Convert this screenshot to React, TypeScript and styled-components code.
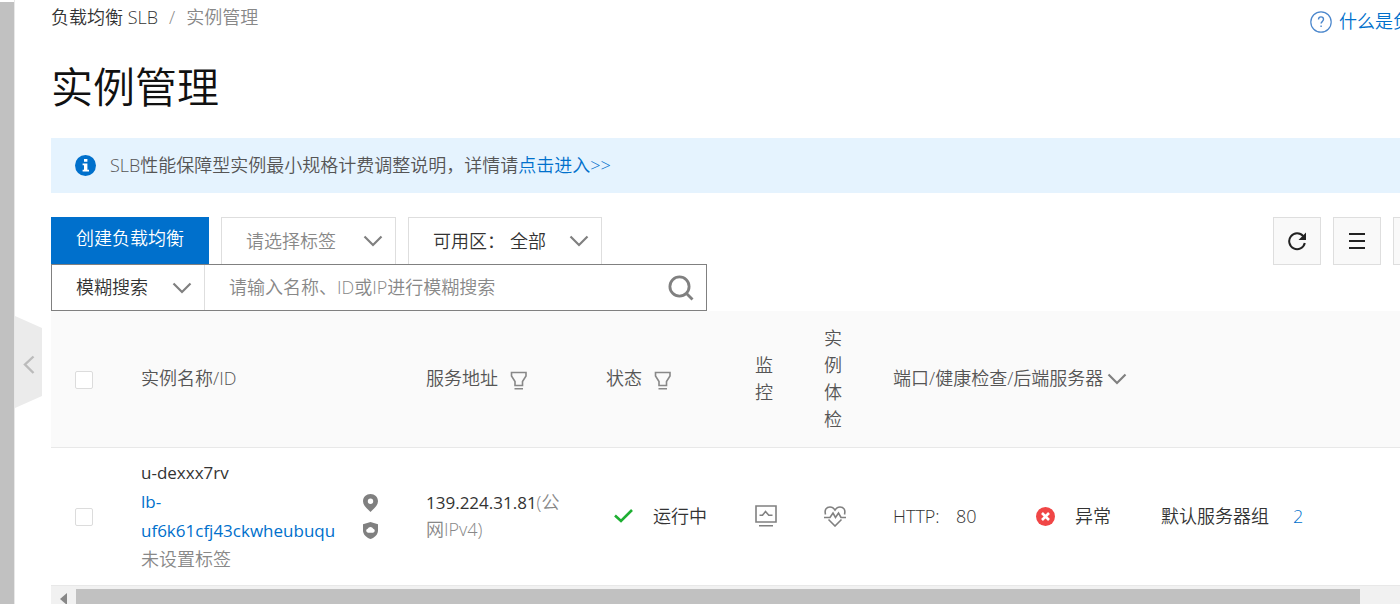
import React from 'react';
import styled, { createGlobalStyle } from 'styled-components';

const GlobalStyle = createGlobalStyle`
  *, *::before, *::after { box-sizing: border-box; }
  html, body { margin: 0; background: #fff; }
  body, button, input, select {
    font-family: "Open Sans", "Noto Sans CJK SC", sans-serif;
    font-size: 18px;
    font-weight: 350;
    line-height: 27px;
    color: #333;
  }
  a { color: #0070cc; text-decoration: none; }
  svg { display: block; flex: none; }
`;

const Page = styled.div`
  position: relative;
  display: flex;
  min-height: 100vh;
  overflow: hidden;
`;

const SideScroll = styled.div`
  flex: 0 0 15px;
  padding-top: 2px;
  background: #c1c1c1 content-box;
  border-right: 1px solid #e8e8e8;
`;

const Handle = styled.button`
  position: absolute;
  left: 15px;
  top: 316px;
  width: 27px;
  height: 92px;
  padding: 0;
  border: 0;
  background: none;
`;

const Main = styled.main`
  flex: 1;
  min-width: 0;
  padding-left: 36px;
`;

const Top = styled.header`
  display: flex;
  justify-content: space-between;
`;

const Crumbs = styled.nav`
  display: flex;
  gap: 11px;
  padding-top: 4px;
  color: #888;
  white-space: nowrap;
  a { color: #333; }
`;

const Help = styled.a`
  display: flex;
  flex: 0 0 90px;
  min-width: 0;
  align-items: center;
  gap: 7px;
  padding-top: 8px;
  white-space: nowrap;
`;

const Title = styled.h1`
  margin: 20px 0;
  font-size: 42px;
  font-weight: 350;
  line-height: 63px;
  color: #111;
`;

const Notice = styled.div`
  display: flex;
  align-items: center;
  gap: 14px;
  height: 55px;
  padding-left: 24px;
  background: #e5f3fe;
  color: #555;
`;

const Toolbar = styled.div`
  display: flex;
  gap: 12px;
  height: 48px;
  margin: 24px -41px 0 0;
`;

const Primary = styled.button`
  width: 158px;
  padding: 0 0 5px;
  border: 0;
  background: #0070cc;
  color: #fff;
`;

const SelectBox = styled.label<{ $width: number; $muted?: boolean; $plain?: boolean }>`
  display: grid;
  grid-template-columns: auto 1fr;
  align-items: center;
  width: ${p => p.$width}px;
  padding: 0 12px 0 24px;
  border: solid #dedede;
  border-width: ${p => (p.$plain ? '0 1px 0 0' : '1px')};
  background: #fff;
  select {
    grid-column: 2;
    grid-row: 1;
    width: 100%;
    padding: 0;
    border: 0;
    appearance: none;
    background: none;
    color: ${p => (p.$muted ? '#888' : '#333')};
  }
  svg { grid-column: 2; grid-row: 1; justify-self: end; pointer-events: none; }
  span { padding-right: 5px; }
`;

const Tools = styled.div`
  display: flex;
  gap: 12px;
  margin-left: auto;
`;

const ToolButton = styled.button`
  display: grid;
  place-items: center;
  width: 48px;
  padding: 0;
  border: 1px solid #dedede;
  background: #f9f9f9;
`;

const Search = styled.form`
  display: flex;
  width: 656px;
  max-width: 100%;
  height: 47px;
  margin-top: -1px;
  position: relative;
  border: 1px solid #808080;
  background: #fff;
  input {
    flex: 1;
    min-width: 0;
    padding: 0 24px;
    border: 0;
    outline: 0;
    background: none;
  }
  input::placeholder { color: #888; opacity: 1; }
`;

const SearchButton = styled.button`
  display: grid;
  place-items: center;
  width: 50px;
  padding: 0;
  border: 0;
  background: none;
`;

const TableArea = styled.div`
  overflow: hidden;
`;

const Table = styled.table`
  width: 100%;
  min-width: 1340px;
  table-layout: fixed;
  border-collapse: collapse;
  th, td {
    padding: 0 24px;
    text-align: left;
    font-weight: 350;
    border-bottom: 1px solid #e8e8e8;
  }
  th { height: 136px; background: #fafafa; color: #555; }
  td { height: 138px; }
`;

const Check = styled.input.attrs({ type: 'checkbox' })`
  display: block;
  appearance: none;
  width: 18px;
  height: 18px;
  margin: 2px 0 0;
  border: 1px solid #dcdcdc;
  border-radius: 2px;
  background: #fff;
`;

const Inline = styled.div<{ $gap: number }>`
  display: flex;
  align-items: center;
  gap: ${p => p.$gap}px;
  white-space: nowrap;
`;

const Narrow = styled.div`
  width: 18px;
`;

const Instance = styled.div`
  display: flex;
  align-items: center;
  justify-content: space-between;
  line-height: 29px;
`;

const Lines = styled.div`
  display: flex;
  flex-direction: column;
  width: 196px;
`;

const Code = styled.span`
  font-size: 17px;
  font-weight: 400;
`;

const Badges = styled.div`
  display: grid;
  gap: 10px;
`;

const Muted = styled.span`
  color: #888;
`;

const Listener = styled.div`
  display: grid;
  grid-template-columns: 63px 80px 39px 86px 132px auto;
  align-items: center;
  white-space: nowrap;
`;

const ScrollTrack = styled.div`
  display: flex;
  height: 19px;
  padding-top: 3px;
  background: #f1f1f1;
`;

const ScrollArrow = styled.button`
  display: grid;
  place-items: center;
  width: 25px;
  padding: 4px 0 0;
  border: 0;
  background: none;
`;

const ScrollThumb = styled.div`
  flex: 1;
  margin-right: 40px;
  background: #c1c1c1;
`;

const Chevron = () => (
  <svg width="20" height="12" viewBox="0 0 20 12" fill="none" stroke="#808080" strokeWidth="2.2">
    <path d="M1.5 1.5 10 10l8.5-8.5" />
  </svg>
);

const Filter = () => (
  <svg width="18" height="24" viewBox="0 0 18 24" fill="none" stroke="#888" strokeWidth="1.6">
    <path d="M1.500 5.500h14.500v3.500l-3.500 5.500v4H5v-4L1.500 9ZM4.500 21.800h8.500" />
  </svg>
);

export default function App() {
  return (
    <>
      <GlobalStyle />
      <Page>
        <SideScroll />
        <Handle aria-label="收起菜单">
          <svg width="27" height="92" viewBox="0 0 27 92" fill="none">
            <path d="M0 0 27 12V80L0 92Z" fill="#ebebeb" />
            <path d="M18.5 40.5 10 48.5l8.5 8.5" stroke="#bbb" strokeWidth="2.4" />
          </svg>
        </Handle>
        <Main>
          <Top>
            <Crumbs>
              <a href="#slb">负载均衡 SLB</a>
              <span>/</span>
              <span>实例管理</span>
            </Crumbs>
            <Help href="#help">
              <svg width="22" height="22" viewBox="0 0 22 22" fill="none" stroke="#4a86cc">
                <circle cx="11" cy="11" r="10.2" strokeWidth="1.2" />
                <path d="M8.500 8.600c0-1.700 1-2.700 2.500-2.700s2.500 1 2.500 2.400c0 2-2.400 2.200-2.400 4.300M11.100 14.400v1.700" strokeWidth="1.4" />
              </svg>
              什么是负载均衡
            </Help>
          </Top>
          <Title>实例管理</Title>
          <Notice>
            <svg width="21" height="21" viewBox="0 0 21 21">
              <circle cx="10.5" cy="10.5" r="10.5" fill="#0070cc" />
              <path d="M9 4h3.400v2.800H9ZM7.600 8.400h4.800v6.400H14v1.800H7.600v-1.800H9v-4.600H7.600Z" fill="#fff" />
            </svg>
            <span>SLB性能保障型实例最小规格计费调整说明，详情请<a href="#notice">点击进入&gt;&gt;</a></span>
          </Notice>
          <Toolbar>
            <Primary>创建负载均衡</Primary>
            <SelectBox $width={175} $muted>
              <select aria-label="标签"><option>请选择标签</option></select>
              <Chevron />
            </SelectBox>
            <SelectBox $width={194}>
              <span>可用区：</span>
              <select><option>全部</option></select>
              <Chevron />
            </SelectBox>
            <Tools>
              <ToolButton aria-label="刷新">
                <svg width="20" height="20" viewBox="0 0 20 20" fill="none">
                  <path d="M16.2 5.2A7.900 7.900 0 1 0 17.800 12" stroke="#222" strokeWidth="2" />
                  <path d="M19 1.500v7.500h-7.500Z" fill="#222" />
                </svg>
              </ToolButton>
              <ToolButton aria-label="列表">
                <svg width="18" height="18" viewBox="0 0 18 18" stroke="#222" strokeWidth="2">
                  <path d="M1 2h16M1 9h16M1 16h16" />
                </svg>
              </ToolButton>
              <ToolButton aria-label="更多" />
            </Tools>
          </Toolbar>
          <Search>
            <SelectBox $width={153} $plain>
              <select aria-label="搜索方式"><option>模糊搜索</option></select>
              <Chevron />
            </SelectBox>
            <input aria-label="搜索" placeholder="请输入名称、ID或IP进行模糊搜索" />
            <SearchButton type="button" aria-label="开始搜索">
              <svg width="26" height="26" viewBox="0 0 26 26" fill="none" stroke="#808080" strokeWidth="2.8">
                <circle cx="11.5" cy="11.5" r="9.6" />
                <path d="m18 18 6.500 6.500" />
              </svg>
            </SearchButton>
          </Search>
          <TableArea>
            <Table>
              <colgroup>
                <col style={{ width: 66 }} />
                <col style={{ width: 285 }} />
                <col style={{ width: 180 }} />
                <col style={{ width: 149 }} />
                <col style={{ width: 69 }} />
                <col style={{ width: 69 }} />
                <col />
              </colgroup>
              <thead>
                <tr>
                  <th><Check aria-label="全选" /></th>
                  <th>实例名称/ID</th>
                  <th><Inline $gap={12}>服务地址<Filter /></Inline></th>
                  <th><Inline $gap={12}>状态<Filter /></Inline></th>
                  <th><Narrow>监控</Narrow></th>
                  <th><Narrow>实例体检</Narrow></th>
                  <th><Inline $gap={4}>端口/健康检查/后端服务器<Chevron /></Inline></th>
                </tr>
              </thead>
              <tbody>
                <tr>
                  <td><Check aria-label="选择 u-dexxx7rv" /></td>
                  <td>
                    <Instance>
                      <Lines>
                        <Code>u-dexxx7rv</Code>
                        <Code as="a" href="#instance">lb-<br />uf6k61cfj43ckwheubuqu</Code>
                        <Muted>未设置标签</Muted>
                      </Lines>
                      <Badges>
                        <svg width="15" height="18" viewBox="0 0 15 18">
                          <path fillRule="evenodd" fill="#808080" d="M7.500 0C3.300 0 0 3.100 0 7.200 0 11.500 4.500 15 7.500 18 10.500 15 15 11.500 15 7.200 15 3.100 11.700 0 7.500 0Zm0 4.500a2.700 2.700 0 1 1 0 5.400 2.700 2.700 0 0 1 0-5.400Z" />
                        </svg>
                        <svg width="15" height="17" viewBox="0 0 15 17">
                          <path fill="#808080" d="M7.500 0 15 2.200v6c0 4.600-3.500 7.300-7.500 8.800C3.500 15.500 0 12.800 0 8.200v-6Z" />
                          <path fill="#fff" d="M5 10.800a2.100 2.100 0 0 1-.3-4.100 3 3 0 0 1 5.500 0A2.100 2.100 0 0 1 10 10.800Z" />
                        </svg>
                      </Badges>
                    </Instance>
                  </td>
                  <td><Code>139.224.31.81</Code><Muted>(公<br />网IPv4)</Muted></td>
                  <td>
                    <Inline $gap={13}>
                      <svg width="34" height="14" viewBox="0 0 34 14" fill="none" stroke="#1eaf32" strokeWidth="2.6">
                        <path d="m9 6.500 6 5.500L26 1" />
                      </svg>
                      运行中
                    </Inline>
                  </td>
                  <td>
                    <svg width="22" height="22" viewBox="0 0 22 22" fill="none" stroke="#808080" strokeWidth="1.6">
                      <path d="M1 1h20v16H1ZM4 20.800h14M4.500 10.300h3l3-3.800 3.300 3.800h3.700" />
                    </svg>
                  </td>
                  <td>
                    <svg width="22" height="22" viewBox="0 0 22 22" fill="none" stroke="#808080" strokeWidth="1.6">
                      <path d="M1.500 9.500C.2 4.500 2.500 2 6 2c2.500 0 3.800 1.200 5 3 1.200-1.800 2.500-3 5-3 3.500 0 5.800 2.500 4.500 7.500M0 12.500h6l3-4.500 2.500 4.500L14.500 8l2.500 4.500h5M4.500 14.500 11 21l6.500-6.500" />
                    </svg>
                  </td>
                  <td>
                    <Listener>
                      <span>HTTP:</span>
                      <span>80</span>
                      <svg width="19" height="19" viewBox="0 0 19 19">
                        <circle cx="9.500" cy="9.500" r="9.500" fill="#f04646" />
                        <path d="m6 6 7 7m0-7-7 7" stroke="#fff" strokeWidth="2.600" />
                      </svg>
                      <span>异常</span>
                      <span>默认服务器组</span>
                      <a href="#servers">2</a>
                    </Listener>
                  </td>
                </tr>
              </tbody>
            </Table>
          </TableArea>
          <ScrollTrack>
            <ScrollArrow aria-label="向左滚动">
              <svg width="7" height="12" viewBox="0 0 7 12"><path d="M7 0v12L0 6Z" fill="#888" /></svg>
            </ScrollArrow>
            <ScrollThumb />
          </ScrollTrack>
        </Main>
      </Page>
    </>
  );
}
